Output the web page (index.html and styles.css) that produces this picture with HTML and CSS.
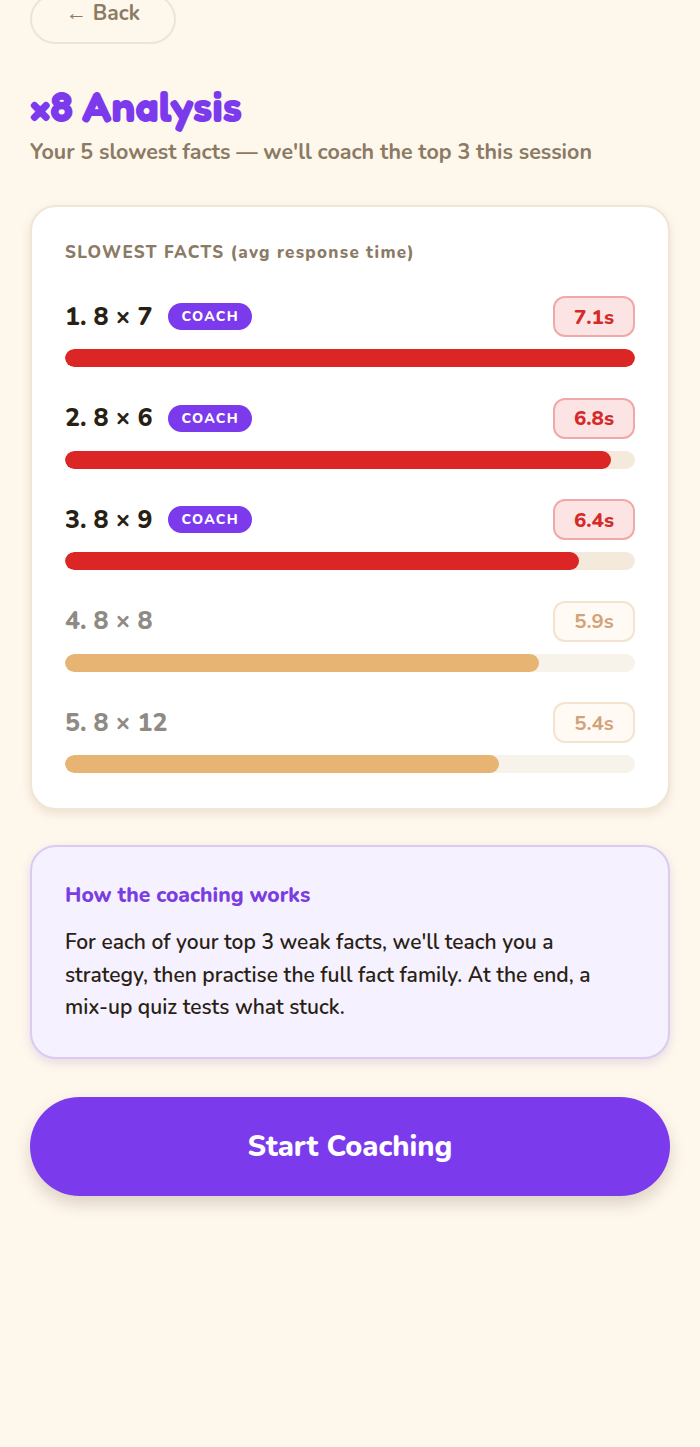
FILE: index.html
```html
<!DOCTYPE html>
<html lang="en">
<head>
<meta charset="utf-8">
<title>x8 Analysis</title>
<link rel="stylesheet" href="styles.css">
</head>
<body>
<main class="page">
  <button class="back">← Back</button>
  <h1 class="title">×8 Analysis</h1>
  <p class="subtitle">Your 5 slowest facts — we'll coach the top 3 this session</p>

  <section class="card">
    <h2 class="card-label">SLOWEST FACTS (avg response time)</h2>
    <div class="rows">
      <div class="row hot">
        <div class="row-head">
          <span class="fact">1. 8 × 7</span>
          <span class="coach">COACH</span>
          <span class="time">7.1s</span>
        </div>
        <div class="track"><div class="fill" style="width:100%"></div></div>
      </div>
      <div class="row hot">
        <div class="row-head">
          <span class="fact">2. 8 × 6</span>
          <span class="coach">COACH</span>
          <span class="time">6.8s</span>
        </div>
        <div class="track"><div class="fill" style="width:95.8%"></div></div>
      </div>
      <div class="row hot">
        <div class="row-head">
          <span class="fact">3. 8 × 9</span>
          <span class="coach">COACH</span>
          <span class="time">6.4s</span>
        </div>
        <div class="track"><div class="fill" style="width:90.1%"></div></div>
      </div>
      <div class="row mild">
        <div class="row-head">
          <span class="fact">4. 8 × 8</span>
          <span class="time">5.9s</span>
        </div>
        <div class="track"><div class="fill" style="width:83.1%"></div></div>
      </div>
      <div class="row mild">
        <div class="row-head">
          <span class="fact">5. 8 × 12</span>
          <span class="time">5.4s</span>
        </div>
        <div class="track"><div class="fill" style="width:76.1%"></div></div>
      </div>
    </div>
  </section>

  <section class="info">
    <h3 class="info-title">How the coaching works</h3>
    <p class="info-text">For each of your top 3 weak facts, we'll teach you a strategy, then practise the full fact family. At the end, a mix-up quiz tests what stuck.</p>
  </section>

  <button class="start">Start Coaching</button>
</main>
</body>
</html>
```

FILE: styles.css
```css
* { box-sizing: border-box; }
html, body { margin: 0; padding: 0; }
body {
  background: #fef7ec;
  font-family: "Nunito", "Open Sans", "Noto Sans", sans-serif;
  color: #2a1f14;
  width: 700px;
  min-height: 1447px;
}
.page {
  padding: 0 30px;
  display: flex;
  flex-direction: column;
}
.back {
  align-self: flex-start;
  margin-top: -6px;
  width: 146px;
  height: 50px;
  border: 2px solid #ede4d4;
  border-radius: 25px;
  background: transparent;
  font-family: inherit;
  font-size: 21px;
  font-weight: 700;
  color: #8b7a64;
  padding: 0 0 12px;
}
.title {
  margin: 40px 0 0;
  font-family: "Fredoka", "Fredoka One", "Nunito", sans-serif;
  font-weight: 700;
  font-size: 42px;
  line-height: 46px;
  color: #7c3aed;
}
.subtitle {
  margin: 9px 0 0;
  font-size: 21.4px;
  line-height: 26px;
  font-weight: 700;
  color: #8b7a64;
}
.card {
  margin-top: 40px;
  background: #fff;
  border: 2px solid #efe6d6;
  border-radius: 26px;
  padding: 35px 33px 35px;
  box-shadow: 0 4px 10px rgba(160, 130, 90, 0.18);
}
.card-label {
  margin: 0;
  font-size: 17px;
  line-height: 22px;
  font-weight: 800;
  letter-spacing: 1.3px;
  color: #8b7a64;
}
.rows {
  margin-top: 32px;
  display: flex;
  flex-direction: column;
  gap: 30.5px;
}
.row { display: flex; flex-direction: column; gap: 12px; }
.row-head {
  display: flex;
  align-items: center;
  gap: 16px;
  height: 41px;
}
.fact {
  font-size: 25px;
  font-weight: 800;
  color: #2a1f14;
}
.coach {
  background: #7c3aed;
  color: #fff;
  font-size: 14px;
  font-weight: 800;
  letter-spacing: 1.3px;
  height: 27px;
  line-height: 27px;
  padding: 0 13px;
  border-radius: 14px;
}
.time {
  margin-left: auto;
  width: 82px;
  height: 41px;
  border-radius: 12px;
  border: 2px solid;
  display: flex;
  align-items: center;
  justify-content: center;
  font-size: 20.5px;
  font-weight: 800;
}
.track {
  height: 18px;
  border-radius: 9px;
  overflow: hidden;
}
.fill { height: 100%; border-radius: 9px; }
.hot .time { background: #fde4e4; border-color: #f0a9a9; color: #d42a2a; }
.hot .track { background: #f3eadb; }
.hot .fill { background: #dc2626; }
.mild .fact { color: #8f8a84; }
.mild .time { background: #fffaf3; border-color: #f3e3cf; color: #d3a27a; font-weight: 700; }
.mild .track { background: #f7f3ea; }
.mild .fill { background: #e8b474; }

.info {
  margin-top: 35px;
  background: #f5f1ff;
  border: 2px solid #dacbf2;
  border-radius: 26px;
  padding: 35px 33px 33px;
  box-shadow: 0 4px 10px rgba(140, 110, 190, 0.2);
}
.info-title {
  margin: 0;
  font-size: 21px;
  line-height: 26px;
  font-weight: 800;
  color: #7a3ee0;
}
.info-text {
  margin: 18px 0 0;
  font-size: 21px;
  line-height: 32.5px;
  font-weight: 600;
  color: #2a1f14;
}
.start {
  margin-top: 38px;
  height: 99px;
  border: none;
  border-radius: 50px;
  background: #7c3aed;
  color: #fff;
  font-family: inherit;
  font-size: 29px;
  font-weight: 800;
  box-shadow: 0 8px 16px rgba(90, 60, 40, 0.2);
}
```
